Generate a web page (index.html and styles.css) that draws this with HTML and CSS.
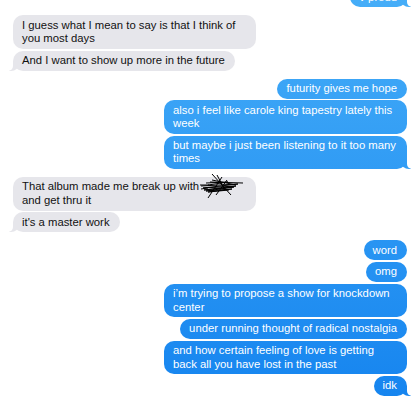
FILE: index.html
```html
<!DOCTYPE html>
<html>
<head>
  <title>Messages</title>
  <link rel="stylesheet" href="styles.css">
</head>
<body>
  <div class="thread">
    <div class="group sent">
      <div class="bubble tail">v proud</div>
    </div>

    <div class="group received">
      <div class="bubble">I guess what I mean to say is that I think of you most days</div>
      <div class="bubble tail">And I want to show up more in the future</div>
    </div>

    <div class="group sent">
      <div class="bubble">futurity gives me hope</div>
      <div class="bubble">also i feel like carole king tapestry lately this week</div>
      <div class="bubble tail">but maybe i just been listening to it too many times</div>
    </div>

    <div class="group received">
      <div class="bubble">That album made me break up with <span class="redacted"></span> and get thru it
        <svg class="scribble" width="46" height="27" viewBox="0 0 46 27">
          <path d="M3 13 L40 11 L5 15 L38 13 L6 17 L36 14 L8 18 L34 16 L10 19 L31 17"/>
          <path d="M2 12 L11 12 M3 16 L10 15"/>
          <path d="M12 9 L45 10 M14 7 L38 12"/>
          <path d="M14 1 L33 22 M19 2 L27 17"/>
          <path d="M24 4 L10 25 M29 7 L18 22"/>
          <path d="M8 10 L30 9 L10 12"/>
        </svg>
      </div>
      <div class="bubble tail">it's a master work</div>
    </div>

    <div class="group sent">
      <div class="bubble">word</div>
      <div class="bubble">omg</div>
      <div class="bubble">i’m trying to propose a show for knockdown center</div>
      <div class="bubble">under running thought of radical nostalgia</div>
      <div class="bubble">and how certain feeling of love is getting back all you have lost in the past</div>
      <div class="bubble tail">idk</div>
    </div>
  </div>
</body>
</html>
```

FILE: styles.css
```css
body {
  margin: 0;
  background-color: #fff;
  font-family: "Liberation Sans", Arial, sans-serif;
}
.thread {
  height: 100vh;
  box-sizing: border-box;
  padding: 0 13px 7px;
  display: flex;
  flex-direction: column;
  justify-content: flex-end;
  overflow: hidden;
}
.group {
  display: flex;
  flex-direction: column;
  gap: 1.75px;
  margin-top: 8px;
  flex-shrink: 0;
}
.sent {
  align-items: flex-end;
}
.received {
  align-items: flex-start;
}
.bubble {
  position: relative;
  box-sizing: border-box;
  max-width: 243px;
  padding: 3.25px 10px 3.25px 9px;
  font-size: 11.3px;
  line-height: 13.5px;
  border-radius: 10px;
}
.sent .bubble {
  color: #fff;
  background: linear-gradient(#45adf8, #1584ef) fixed;
}
.received .bubble {
  color: #111;
  background-color: #e6e6eb;
}

/* little tails on the last bubble of a group */
.tail::before,
.tail::after {
  content: "";
  position: absolute;
  bottom: 0;
  height: 10px;
}
.sent .tail::before {
  right: -4px;
  width: 10px;
  background: inherit;
  border-bottom-left-radius: 8px 7px;
}
.sent .tail::after {
  right: -13px;
  width: 13px;
  background-color: #fff;
  border-bottom-left-radius: 5px;
}
.received .tail::before {
  left: -4px;
  width: 10px;
  background: inherit;
  border-bottom-right-radius: 8px 7px;
}
.received .tail::after {
  left: -13px;
  width: 13px;
  background-color: #fff;
  border-bottom-right-radius: 5px;
}

.redacted {
  display: inline-block;
  width: 26px;
}
.scribble {
  position: absolute;
  left: 185px;
  top: -4px;
  fill: none;
  stroke: #000;
  stroke-width: 1;
  stroke-linejoin: round;
}
```
